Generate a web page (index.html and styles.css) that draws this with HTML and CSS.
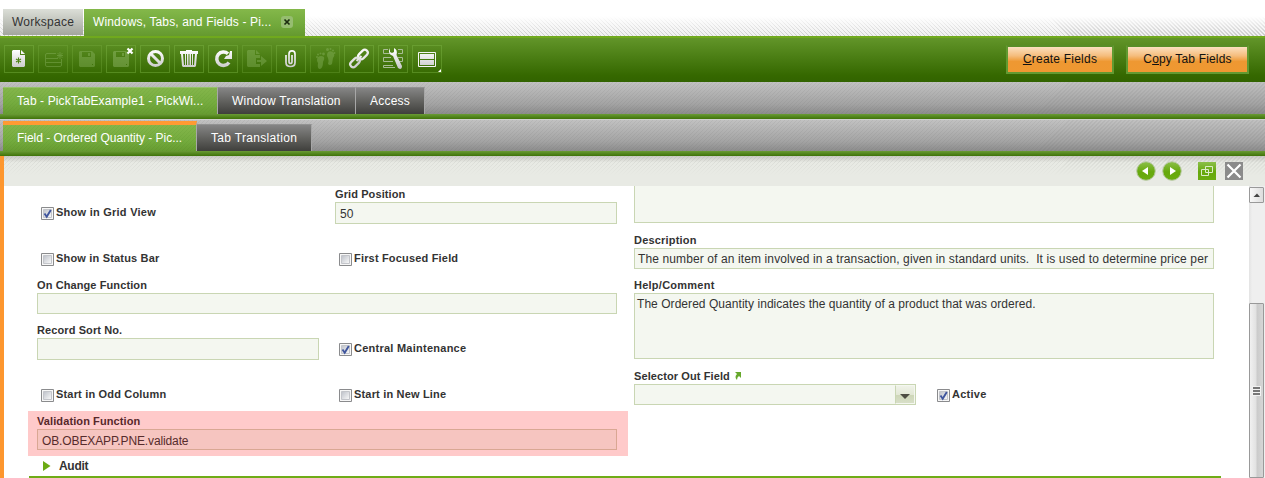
FILE: index.html
```html
<!DOCTYPE html>
<html lang="en">
<head>
<meta charset="utf-8">
<title>Windows, Tabs, and Fields</title>
<link rel="stylesheet" href="styles.css">
</head>
<body>
<svg class="defs" width="0" height="0">
  <defs>
    <linearGradient id="g" gradientUnits="userSpaceOnUse" x1="0" y1="5" x2="0" y2="23"><stop offset="0" stop-color="#fff"/><stop offset="1" stop-color="#c9c9c9"/></linearGradient>
    <linearGradient id="cb" x1="0" y1="0" x2="1" y2="1"><stop offset="0" stop-color="#bcc0c8"/><stop offset="1" stop-color="#fbfbfb"/></linearGradient>
    <linearGradient id="ball" x1="0" y1="0" x2="0" y2="1"><stop offset="0" stop-color="#8cc04a"/><stop offset=".55" stop-color="#66a80c"/><stop offset="1" stop-color="#6bac12"/></linearGradient>
  </defs>
</svg>
<header class="main-tabs">
  <div class="mtab workspace"><span>Workspace</span></div>
  <div class="mtab current"><span>Windows, Tabs, and Fields - Pi...</span>
    <svg class="tab-close" width="12" height="12"><path d="M3.500 3.500l5 5M8.500 3.500l-5 5" stroke="#1c2b10" stroke-width="1.700"/></svg>
  </div>
</header>
<nav class="toolbar">
  <div class="tools">
    <button class="tool"><svg width="30" height="28"><path fill="url(#g)" fill-rule="evenodd" d="M9 5h7v5h5v11l-1 1H9l-1-1V6zM17 5l4 4h-4z"/><path d="M14.500 12.500v6M12 14l5 3M17 14l-5 3" stroke="#4b8313" stroke-width="1.100"/></svg></button>
    <button class="tool off"><svg width="30" height="28"><path fill="none" stroke="#9dc477" d="M18 8.500H9Q7.500 8.500 7.500 10v10q0 1.500 1.500 1.500h13q1.500 0 1.500-1.500v-6M8 13.500h12M8 17.500h15M22 7v7M19 10.500h6M19.500 8l5 5M24.500 8l-5 5"/></svg></button>
    <button class="tool off"><svg width="30" height="28"><path fill="#9dc477" fill-rule="evenodd" d="M8 6h12l3 3v12l-1 1H8l-1-1V7zM10 7v5h9V7zM16 8h2v3h-2zM20 19v1h1v-1z"/></svg></button>
    <button class="tool"><svg width="30" height="28"><path fill="#9dc477" opacity=".4" fill-rule="evenodd" d="M8 6h12l3 3v12l-1 1H8l-1-1V7zM10 7v5h9V7zM16 8h2v3h-2zM20 19v1h1v-1z"/><path d="M21.500 3.500l5 5M26.500 3.500l-5 5" stroke="#fff" stroke-width="2.200"/></svg></button>
    <button class="tool"><svg width="30" height="28"><g fill="none" stroke="url(#g)" stroke-width="3"><circle cx="15.500" cy="13.500" r="7"/><path d="M10.500 8.500l10 10"/></g></svg></button>
    <button class="tool"><svg width="30" height="28"><path fill="url(#g)" fill-rule="evenodd" d="M12 5h6v1h6v3h-1l-1 12-1 1H9l-1-1L7 9H6V6h6zM9 9l1 11h1V9zM12 9v11h1V9zM14.500 9v11h1V9zM17 9v11h1V9zM19 9v11h1l1-11z"/></svg></button>
    <button class="tool"><svg width="30" height="28"><path d="M21 17.500A6.700 6.700 0 1 1 20 8.800" fill="none" stroke="url(#g)" stroke-width="3.500"/><path fill="url(#g)" d="M24 6v8h-8l2-3 3-1 1-4z"/></svg></button>
    <button class="tool off"><svg width="30" height="28"><path fill="#9dc477" d="M6 5h7v5h5v3h-4v6h4v3H6l-1-1V6zM14 5l4 4h-4zM15 15h4v-4l6 5-6 5v-4h-4z"/></svg></button>
    <button class="tool"><svg width="30" height="28"><path fill="none" stroke="url(#g)" stroke-width="1.700" d="M10 10v7.500q0 4 4.500 4t4.500-4V9q0-3.200-3-3.200T13 9v7.500q0 2 1.500 2t1.500-2V10"/></svg></button>
    <button class="tool off"><svg width="30" height="28"><g fill="#9dc477"><path d="M8 12q3-2 6 0 1 2-1 5 0 6-3 7-3 0-2-6-2-3 0-6zM18 7q3-2 6 1 1 3-1 5l-1 6q-2 2-4 0 1-4 0-6-2-3 0-6z"/><circle cx="7" cy="12" r="1"/><circle cx="8" cy="9.500" r="1"/><circle cx="10.500" cy="8.500" r="1"/><circle cx="13.500" cy="9" r="1.400"/><circle cx="17.500" cy="4.500" r="1.500"/><circle cx="20.500" cy="4" r="1"/><circle cx="23" cy="5.500" r="1"/><circle cx="24.500" cy="8" r="1"/></g></svg></button>
    <button class="tool"><svg width="30" height="28"><g fill="none" stroke="url(#g)" stroke-width="2.200"><rect x="13.500" y="6.500" width="11" height="6" rx="3" transform="rotate(-45 19 9.500)"/><rect x="5.500" y="14.500" width="11" height="6" rx="3" transform="rotate(-45 11 17.500)"/><path d="M12.500 16l5-5"/></g></svg></button>
    <button class="tool"><svg width="30" height="28"><path fill="none" stroke="#a9bd96" d="M10 4.500H5.500v4H13M20 4.500h4.500v4H20M13 12.500H5.500v4H15M20 12.500h4.500v4H21M15 20.500H5.500v2H17"/><path fill="url(#g)" d="M12 3v4l2 1 2-1V3q4 2 2.500 7l5.500 11q0 3-2 3l-2-1-5-12q-6-2-3-8z"/></svg></button>
    <button class="tool"><svg width="30" height="28"><path fill="none" stroke="#f5f5f5" d="M6.500 7.500h17v14h-17z"/><path fill="url(#g)" d="M8 9h14v5H8zM8 15h14v5H8z"/><path fill="#fff" d="M29 24v3h-3z"/></svg></button>
  </div>
  <div class="actions">
    <button class="action create"><span><u>C</u>reate Fields</span></button>
    <button class="action copy"><span>C<u>o</u>py Tab Fields</span></button>
  </div>
</nav>
<nav class="level first">
  <div class="tab on t1"><span>Tab - PickTabExample1 - PickWi...</span></div>
  <div class="tab t2"><span>Window Translation</span></div>
  <div class="tab t3"><span>Access</span></div>
</nav>
<nav class="level second">
  <div class="tab on focus t4"><span>Field - Ordered Quantity - Pic...</span></div>
  <div class="tab t5"><span>Tab Translation</span></div>
</nav>
<main class="panel">
  <div class="panel-head">
    <svg width="20" height="20"><circle cx="10" cy="10" r="9.300" fill="url(#ball)" stroke="#b9c9a6"/><path d="M12 6v8l-6-4z" fill="#fff"/></svg>
    <svg class="next" width="20" height="20"><circle cx="10" cy="10" r="9.300" fill="url(#ball)" stroke="#b9c9a6"/><path d="M8 6v8l6-4z" fill="#fff"/></svg>
    <svg class="restore" width="18" height="18"><path fill="url(#ball)" d="M0 0h18v18H0z"/><path d="M7.500 4.500h7v6h-7zM3.500 7.500h7v6h-7z" fill="none" stroke="#dcebc9"/></svg>
    <svg class="close" width="18" height="18"><path fill="#8b8b8b" d="M0 0h18v18H0z"/><path d="M2.500 2.500l13 13M15.500 2.500l-13 13" stroke="#fff" stroke-width="2.200"/></svg>
  </div>
  <div class="body">
    <div class="form">
      <div class="columns">
        <section class="col">
          <div class="row r1">
            <label class="check"><svg width="13" height="13"><use href="#box"/><use href="#tick"/></svg><span>Show in Grid View</span></label>
            <div class="field"><b>Grid Position</b><div class="input tall num">50</div></div>
          </div>
          <div class="row r2">
            <label class="check"><svg width="13" height="13"><use href="#box"/></svg><span>Show in Status Bar</span></label>
            <label class="check"><svg width="13" height="13"><use href="#box"/></svg><span>First Focused Field</span></label>
          </div>
          <div class="field r3"><b>On Change Function</b><div class="input"></div></div>
          <div class="row r4">
            <div class="field"><b>Record Sort No.</b><div class="input tall"></div></div>
            <label class="check"><svg width="13" height="13"><use href="#box"/><use href="#tick"/></svg><span>Central Maintenance</span></label>
          </div>
          <div class="row r5">
            <label class="check"><svg width="13" height="13"><use href="#box"/></svg><span>Start in Odd Column</span></label>
            <label class="check"><svg width="13" height="13"><use href="#box"/></svg><span>Start in New Line</span></label>
          </div>
          <div class="field highlight"><b>Validation Function</b><div class="input">OB.OBEXAPP.PNE.validate</div></div>
        </section>
        <section class="col">
          <div class="input cut"></div>
          <div class="field desc"><b>Description</b><div class="input line">The number of an item involved in a transaction, given in standard units.&nbsp; It is used to determine price per</div></div>
          <div class="field help"><b>Help/Comment</b><div class="input area">The Ordered Quantity indicates the quantity of a product that was ordered.</div></div>
          <div class="row r6">
            <div class="field"><b>Selector Out Field <svg class="jump" width="7" height="8"><path d="M1 0h6v6L5 4Q3 5 3 8 0 5 3 2z" fill="#67a82c"/></svg></b>
              <div class="input select"><i><svg width="18" height="17"><path d="M4 8h10l-5 5z" fill="#4d4d43"/></svg></i></div></div>
            <label class="check"><svg width="13" height="13"><use href="#box"/><use href="#tick"/></svg><span>Active</span></label>
          </div>
        </section>
      </div>
      <div class="audit"><svg width="8" height="10"><path d="M0 0l7.500 5L0 10z" fill="#6cab14"/></svg><b>Audit</b></div>
    </div>
    <aside class="scroll">
      <div class="up"><svg width="13" height="14"><path d="M3.500 9l3.500-3.500 3 3.500z" fill="#444"/></svg></div>
      <div class="thumb"><svg width="9" height="10"><path d="M0 0h9v10H0z" fill="#f2f2f2"/><path d="M1 1h7v2H1zM1 4h7v2H1zM1 7h7v2H1z" fill="#777"/></svg></div>
    </aside>
  </div>
</main>
<svg class="defs" width="0" height="0"><defs>
  <g id="box"><path d="M.5.5h12v12H.5z" fill="#f7f7f7" stroke="#8a8b8d"/><path d="M2.500 2.500h8v8h-8z" fill="url(#cb)" stroke="#c3c5ca"/></g>
  <path id="tick" d="M3.500 6.500L5.700 9.700 9.800 3" fill="none" stroke="#3f559d" stroke-width="1.900"/>
</defs></svg>
</body>
</html>
```
FILE: styles.css
```css
* { box-sizing: border-box; }
body { margin: 0; width: 1265px; height: 478px; overflow: hidden; background: #fff; font: 12px/14px "Liberation Sans", Arial, sans-serif; letter-spacing: .22px; color: #333; }
.defs { position: absolute; }
svg { display: block; flex: none; }
button { padding: 0; font: inherit; letter-spacing: inherit; }
span { white-space: nowrap; }

.main-tabs { height: 36px; padding: 9px 0 0 3px; display: flex; gap: 1px; background: linear-gradient(#fff 45%, rgba(255,255,255,.1)), repeating-linear-gradient(45deg, #c4c4c4 0 1px, #eee 1px 2.830px); }
.mtab { display: flex; align-items: center; padding: 0 9px; }
.workspace { width: 80px; height: 26px; background: linear-gradient(#dcdfd8, #a3a69e); color: #333; letter-spacing: .25px; }
.current { width: 221px; height: 27px; padding: 0 12px 2px 9px; justify-content: space-between; color: #fff; letter-spacing: .14px; background: linear-gradient(#84b84a, #71a83b 60%, #65992f); }
.tab-close { border-radius: 3px; background: #96bd70; }

.toolbar { height: 46px; border-top: 2px solid #70a91d; padding: 7px 16px 0 4px; display: flex; justify-content: space-between; background: linear-gradient(#629529, #356800 85%, #326300); }
.tools { display: flex; gap: 4px; }
.tool { width: 30px; height: 28px; border: 0; background: none; box-shadow: inset 0 0 0 1px rgba(126,180,70,.43); }
.off { box-shadow: inset 0 0 0 1px rgba(126,180,70,.3); }
.off svg { opacity: .33; }
.actions { display: flex; gap: 12px; }
.action { height: 29px; padding-bottom: 2px; border: 2px solid #629a31; border-top-color: #588d27; color: #111; background: linear-gradient(#fbe0bf, #f5bd7d 35%, #ee9832 58%, #ef9831); }
.create { width: 108px; }
.copy { width: 123px; letter-spacing: .17px; }

.level { height: 37px; padding: 0 0 5px 3px; display: flex; align-items: flex-end; background: linear-gradient(#6a9b35, #3f7309) bottom / 100% 5px no-repeat, repeating-linear-gradient(135deg, rgba(70,70,70,.07) 0 1px, transparent 1px 2.830px), linear-gradient(#c1c1c1, #a3a3a3 60%, #8c8c8c 86%); }
.second { border-top: 1px solid #d0d0d0; }
.tab { height: 27px; padding: 0 14px; display: flex; align-items: center; color: #fff; border-top: 1px solid #929292; border-right: 1px solid #a7a7a7; background: linear-gradient(#858585, #62625f 50%, #3f3f3c); }
.on { border-top-color: #96c36a; background: repeating-linear-gradient(135deg, rgba(50,110,10,.07) 0 1px, transparent 1px 2.830px), linear-gradient(#84b64b, #74ab3e 60%, #679c31); }
.focus { height: 30px; border-top: 4px solid #ff9a33; }
.t1 { width: 215px; letter-spacing: .11px; }
.t2 { width: 138px; }
.t3 { width: 69px; }
.t4 { width: 194px; letter-spacing: -.03px; }
.t5 { width: 115px; letter-spacing: .32px; }

.panel { height: 322px; border-left: 4px solid #fd962e; }
.panel-head { height: 30px; padding: 5px 22px 0 0; display: flex; justify-content: flex-end; background: linear-gradient(rgba(180,180,175,.6), rgba(232,234,228,.45) 22%, #e8eae4 65%), repeating-linear-gradient(135deg, #d2d4ce 0 1px, #e8eae4 1px 2.830px); }
.next { margin-left: 6px; }
.restore { margin: 1px 9px 0 16px; }
.close { margin-top: 1px; }
.body { height: 292px; display: flex; justify-content: space-between; overflow: hidden; }
.form { width: 1217px; padding-left: 25px; }
.columns { display: flex; gap: 17px; padding-left: 8px; height: 270px; }
.col { width: 580px; }
.row { display: flex; gap: 16px; }
.row > * { width: 282px; }
.check { display: flex; height: 13px; padding-left: 4px; gap: 2px; }
.check span, b { font-size: 11px; font-weight: bold; letter-spacing: .1px; color: #333; }
.check span { line-height: 12px; letter-spacing: .25px; position: relative; top: -1px; }
.field b { display: block; height: 16px; line-height: 17px; }
.input { height: 21px; padding: 4px 4px 0; border: 1px solid #c9d6b3; background: #f4f7f0; letter-spacing: .05px; white-space: nowrap; overflow: hidden; }
.tall { height: 22px; }
.line { padding: 3px 3px 0; letter-spacing: .115px; }
.r1 { height: 67px; }
.r1 .check { margin-top: 21px; }
.r2 { height: 24px; }
.r2 span, .r5 span { letter-spacing: .18px; }
.r3 { height: 45px; }
.r4 { height: 67px; }
.r4 .check { margin-top: 21px; }
.r5 { height: 22px; }
.highlight { width: 600px; height: 45px; margin-left: -9px; padding: 2px 11px 0 9px; background: #ffcaca; }
.highlight b { color: #56282a; }
.highlight .input { border-color: #d9a793; background: #f6c5c0; color: #562c2c; letter-spacing: -.12px; }
.cut { height: 37px; border-top: 0; margin-bottom: 9px; }
.desc { height: 45px; }
.desc b { letter-spacing: .2px; }
.help { height: 91px; }
.help b { letter-spacing: .25px; }
.area { height: 66px; padding: 3px 2px; }
.jump { display: inline-block; margin-left: 1px; }
.select { padding: 0; display: flex; justify-content: flex-end; }
.select i { width: 20px; border: 1px solid #f4f7f0; border-left: 1px solid #c9d6b3; background: linear-gradient(#eff2e8, #e3e8d6 50%, #cdd6b7 52%, #d8dfc8); }
.r6 .check { margin-top: 21px; padding-left: 5px; }
.audit { width: 1192px; height: 22px; padding: 5px 0 0 14px; display: flex; gap: 8px; border-bottom: 2px solid #6fac17; }
.audit b { font-size: 12px; line-height: 10px; letter-spacing: -.3px; }
.scroll { width: 16px; padding-top: 1px; background: linear-gradient(90deg, #e3e3e3, #efefef 20%); }
.up { width: 15px; height: 16px; border: 1px solid #999; border-radius: 1px; background: linear-gradient(90deg, #f8f8f8, #ddd); }
.thumb { width: 15px; height: 175px; margin-top: 100px; border: 1px solid #999; border-radius: 1px; display: flex; align-items: center; justify-content: center; background: linear-gradient(90deg, #f1f1f1, #e2e2e2 45%, #cbcbcb 55%, #d6d6d6); }
```
